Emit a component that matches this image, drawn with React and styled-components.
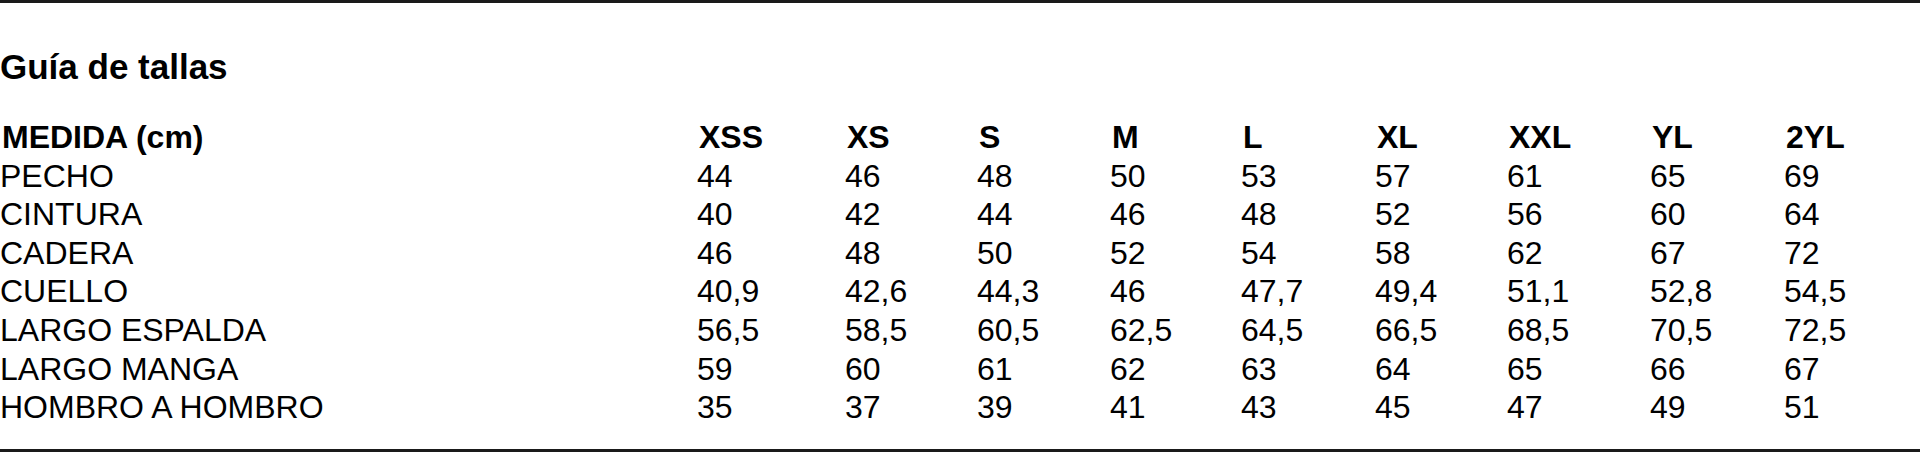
import React from 'react';
import styled, { createGlobalStyle } from 'styled-components';

const GlobalStyle = createGlobalStyle`
  html, body {
    margin: 0;
    padding: 0;
    background: #fff;
  }
  body {
    font-family: "Liberation Sans", Arial, sans-serif;
    color: #000;
  }
`;

const Wrapper = styled.section`
  box-sizing: border-box;
  width: 1920px;
  height: 452px;
  border-top: 3px solid #1a1a1a;
  border-bottom: 3px solid #1a1a1a;
  padding-top: 44px;
`;

const Title = styled.h2`
  margin: 0;
  font-size: 35px;
  line-height: 40px;
  font-weight: 700;
`;

const Table = styled.div`
  margin-top: 31px;
`;

const Row = styled.div`
  display: grid;
  grid-template-columns: 697px 148px 132px 133px 131px 134px 132px 143px 134px 1fr;
  font-size: 32px;
  line-height: 38.6px;
  font-weight: ${(p) => (p.$head ? 700 : 400)};
`;

const Cell = styled.div`
  white-space: nowrap;
  padding-left: ${(p) => (p.$head ? '2px' : '0')};
`;

const sizes = ['XSS', 'XS', 'S', 'M', 'L', 'XL', 'XXL', 'YL', '2YL'];

const rows = [
  ['PECHO', '44', '46', '48', '50', '53', '57', '61', '65', '69'],
  ['CINTURA', '40', '42', '44', '46', '48', '52', '56', '60', '64'],
  ['CADERA', '46', '48', '50', '52', '54', '58', '62', '67', '72'],
  ['CUELLO', '40,9', '42,6', '44,3', '46', '47,7', '49,4', '51,1', '52,8', '54,5'],
  ['LARGO ESPALDA', '56,5', '58,5', '60,5', '62,5', '64,5', '66,5', '68,5', '70,5', '72,5'],
  ['LARGO MANGA', '59', '60', '61', '62', '63', '64', '65', '66', '67'],
  ['HOMBRO A HOMBRO', '35', '37', '39', '41', '43', '45', '47', '49', '51'],
];

const App = () => {
  return (
    <>
      <GlobalStyle />
      <Wrapper>
        <Title>Guía de tallas</Title>
        <Table>
          <Row $head>
            <Cell $head>MEDIDA (cm)</Cell>
            {sizes.map((s) => (
              <Cell $head key={s}>{s}</Cell>
            ))}
            <Cell />
          </Row>
          {rows.map((r) => (
            <Row key={r[0]}>
              {r.map((v, i) => (
                <Cell key={i}>{v}</Cell>
              ))}
              <Cell />
            </Row>
          ))}
        </Table>
      </Wrapper>
    </>
  );
};

export default App;
